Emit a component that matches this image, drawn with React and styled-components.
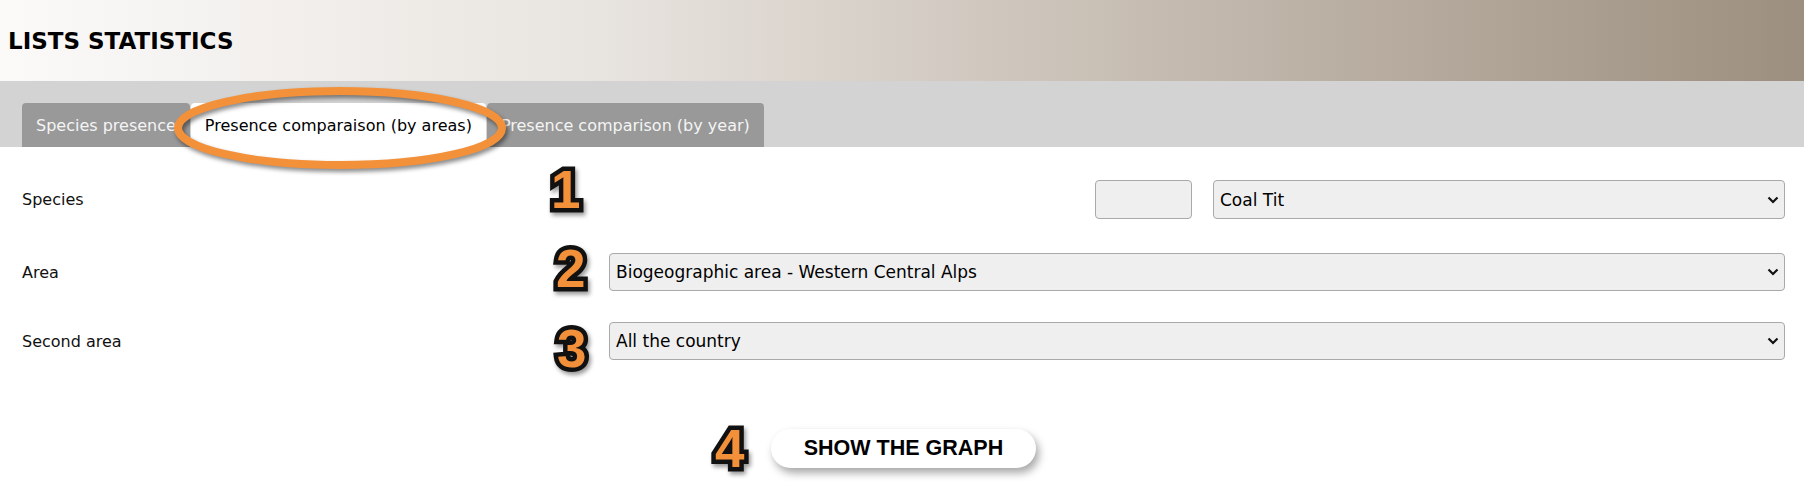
import React from 'react';
import styled, { createGlobalStyle } from 'styled-components';

const GlobalStyle = createGlobalStyle`
  body {
    margin: 0;
    background: #fff;
    font-family: "DejaVu Sans", Verdana, sans-serif;
    color: #111;
  }
`;

const Page = styled.div`
  position: relative;
  width: 100%;
  min-height: 498px;
  background: #fff;
`;

const Header = styled.header`
  height: 81px;
  display: flex;
  align-items: center;
  padding-left: 8px;
  background: linear-gradient(
    90deg,
    #fbfaf9 0%,
    #e8e4df 33%,
    #c3b9ae 66%,
    #9c8f7f 100%
  );
`;

const Title = styled.h1`
  margin: 0;
  font-size: 23px;
  font-weight: bold;
  color: #000;
`;

const TabBar = styled.nav`
  height: 66px;
  display: flex;
  align-items: flex-end;
  padding-left: 22px;
  background: #d3d3d3;
`;

const Tab = styled.div`
  height: 44px;
  display: flex;
  align-items: center;
  padding: 0 14px;
  margin-right: 1px;
  border-radius: 4px 4px 0 0;
  font-size: 16px;
  background: ${({ $active }) => ($active ? '#fff' : '#999')};
  color: ${({ $active }) => ($active ? '#000' : '#f4f4f4')};
`;

const Form = styled.form`
  padding: 33px 19px 0 22px;
`;

const Row = styled.div`
  display: grid;
  grid-template-columns: 587px 1fr;
  align-items: center;
  margin-bottom: ${({ $spacing }) => $spacing}px;
`;

const Label = styled.label`
  font-size: 16px;
  color: #111;
`;

const Controls = styled.div`
  display: flex;
  justify-content: flex-end;
  gap: 21px;
`;

const Field = styled.div`
  box-sizing: border-box;
  height: ${({ $h }) => $h || 38}px;
  border: 1px solid #a9a9a9;
  border-radius: 4px;
  background: #efefef;
`;

const CodeInput = styled(Field)`
  width: 97px;
`;

const Select = styled(Field)`
  flex: ${({ $width }) => ($width ? `0 0 ${$width}px` : '1')};
  display: flex;
  align-items: center;
  justify-content: space-between;
  padding: 0 5px 0 6px;
  font-size: 17px;
  color: #000;
`;

const Chevron = () => (
  <svg width="12" height="8" viewBox="0 0 12 8">
    <path d="M1.5 1.5 L6 6 L10.5 1.5" fill="none" stroke="#111" strokeWidth="2.2" />
  </svg>
);

const ButtonRow = styled.div`
  display: flex;
  justify-content: center;
  padding-top: 69px;
`;

const GraphButton = styled.button`
  width: 265px;
  height: 39px;
  border: none;
  border-radius: 20px;
  background: #fff;
  box-shadow: 3px 5px 9px rgba(0, 0, 0, 0.35);
  font-family: "Liberation Sans", Arial, sans-serif;
  font-weight: bold;
  font-size: 21.5px;
  color: #000;
`;

const Step = styled.span`
  position: absolute;
  left: ${({ $x }) => $x}px;
  top: ${({ $y }) => $y}px;
  font-family: "Liberation Sans", Arial, sans-serif;
  font-weight: bold;
  font-size: 53px;
  line-height: 54px;
  color: #f3913a;
  -webkit-text-stroke: 9px #111;
  paint-order: stroke fill;
  filter: drop-shadow(2px 3px 2px rgba(0, 0, 0, 0.4));
`;

const Ring = styled.svg`
  position: absolute;
  left: 170px;
  top: 84px;
  filter: drop-shadow(2px 3px 2px rgba(0, 0, 0, 0.45));
`;

const rows = [
  { label: 'Species', spacing: 34 },
  { label: 'Area', value: 'Biogeographic area - Western Central Alps', spacing: 31 },
  { label: 'Second area', value: 'All the country', spacing: 0 },
];

export default function App() {
  return (
    <Page>
      <GlobalStyle />
      <Header>
        <Title>LISTS STATISTICS</Title>
      </Header>
      <TabBar>
        <Tab>Species presence</Tab>
        <Tab $active>Presence comparaison (by areas)</Tab>
        <Tab>Presence comparison (by year)</Tab>
      </TabBar>
      <Form>
        {rows.map((row, index) => (
          <Row key={index} $spacing={row.spacing}>
            <Label>{row.label}</Label>
            {index === 0 ? (
              <Controls>
                <CodeInput $h={39} />
                <Select $width={572} $h={39}>
                  <span>Coal Tit</span>
                  <Chevron />
                </Select>
              </Controls>
            ) : (
              <Controls>
                <Select>
                  <span>{row.value}</span>
                  <Chevron />
                </Select>
              </Controls>
            )}
          </Row>
        ))}
        <ButtonRow>
          <GraphButton type="button">SHOW THE GRAPH</GraphButton>
        </ButtonRow>
      </Form>

      <Ring width="345" height="92" viewBox="0 0 345 92">
        <ellipse cx="170" cy="44" rx="162" ry="37" fill="none" stroke="#f3913a" strokeWidth="8" />
      </Ring>
      <Step $x={551} $y={163}>1</Step>
      <Step $x={556} $y={242}>2</Step>
      <Step $x={557} $y={322}>3</Step>
      <Step $x={715} $y={422}>4</Step>
    </Page>
  );
}
